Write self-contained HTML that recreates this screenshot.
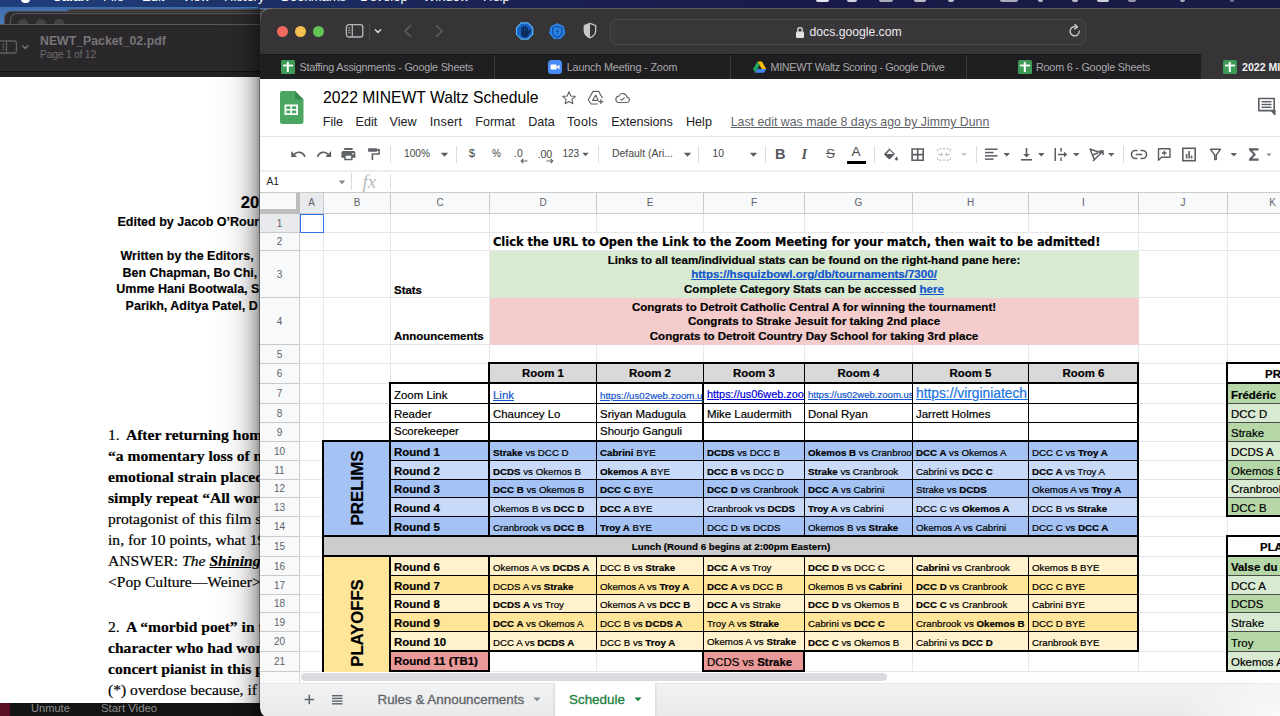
<!DOCTYPE html>
<html lang="en">
<head>
<meta charset="utf-8">
<title>2022 MINEWT Waltz Schedule - Google Sheets</title>
<style>
html,body{margin:0;padding:0;}
body{width:1280px;height:716px;overflow:hidden;position:relative;background:#2f5ea3;font-family:"Liberation Sans",Arial,sans-serif;}
div,span{box-sizing:content-box;}
#stage{position:absolute;left:0;top:0;width:1280px;height:716px;overflow:hidden;}
#stage div{position:absolute;}
.t{white-space:normal;line-height:1.15;-webkit-text-stroke:0.2px;}
.t>span{position:absolute;display:block;}
.t b{font-weight:bold;}
.ch{font-family:"Liberation Sans",sans-serif;}
.v{position:absolute;left:50%;white-space:nowrap;font-weight:bold;transform:translate(-50%,-50%) rotate(-90deg);line-height:1;}
.ab{position:absolute;}
svg{position:absolute;overflow:visible;}
.mi{position:absolute;top:115px;font-size:12.6px;color:#202124;white-space:nowrap;}
.tb{position:absolute;white-space:nowrap;color:#444746;}
.sep{position:absolute;top:146px;width:1px;height:17px;background:#dadce0;}
.tab{position:absolute;top:54.5px;height:25px;font-size:10.8px;color:#aaa8ab;line-height:25px;white-space:nowrap;}
.pdfb{-webkit-text-stroke:0.15px;position:absolute;font-family:"Liberation Sans",sans-serif;font-weight:bold;font-size:12.5px;color:#000;white-space:nowrap;}
.pdfs{-webkit-text-stroke:0.2px;position:absolute;font-family:"Liberation Serif",serif;font-size:15.6px;color:#000;white-space:nowrap;line-height:21px;}
</style>
</head>
<body>
<div id="stage">
<!-- desktop + menu bar -->
<div style="left:0;top:0;width:1280px;height:24px;background:linear-gradient(180deg,#3a68a8 0,#4a7dba 100%);"></div>
<div id="menubar" style="left:0;top:0;width:1280px;height:7px;background:linear-gradient(90deg,#1f3f7a 0,#1e3a74 10%,#1c3065 21%,#1b2052 40%,#1a1a48 65%,#1a1a46 100%);overflow:hidden;color:#fff;font-size:13px;white-space:nowrap;">
<span class="ab" style="left:21px;top:-8px;width:9px;height:10.5px;border-radius:4px;background:#fff;"></span><span class="ab" style="left:53px;top:-10.8px;font-weight:bold;">Safari</span>
<span class="ab" style="left:103px;top:-10.8px;">File</span>
<span class="ab" style="left:142px;top:-10.8px;">Edit</span>
<span class="ab" style="left:182px;top:-10.8px;">View</span>
<span class="ab" style="left:224px;top:-10.8px;">History</span>
<span class="ab" style="left:281px;top:-10.8px;">Bookmarks</span>
<span class="ab" style="left:360px;top:-10.8px;">Develop</span>
<span class="ab" style="left:423px;top:-10.8px;">Window</span>
<span class="ab" style="left:483px;top:-10.8px;">Help</span><span class="ab" style="left:816px;top:-3px;width:13px;height:5px;border-radius:2px;background:#e8e8ee;opacity:1;"></span><span class="ab" style="left:847px;top:-3px;width:10px;height:5px;border-radius:2px;background:#e8e8ee;opacity:0.9;"></span><span class="ab" style="left:879px;top:-3px;width:14px;height:5px;border-radius:2px;background:#e8e8ee;opacity:0.7;"></span><span class="ab" style="left:914px;top:-3px;width:12px;height:5px;border-radius:2px;background:#e8e8ee;opacity:0.8;"></span><span class="ab" style="left:948px;top:-3px;width:6px;height:5px;border-radius:2px;background:#e8e8ee;opacity:0.8;"></span><span class="ab" style="left:1000px;top:-3px;width:18px;height:5px;border-radius:2px;background:#e8e8ee;opacity:0.7;"></span><span class="ab" style="left:1038px;top:-3px;width:5px;height:5px;border-radius:2px;background:#e8e8ee;opacity:0.8;"></span><span class="ab" style="left:1072px;top:-3px;width:6px;height:5px;border-radius:2px;background:#e8e8ee;opacity:0.8;"></span><span class="ab" style="left:1097px;top:-3px;width:12px;height:5px;border-radius:2px;background:#e8e8ee;opacity:0.9;"></span><span class="ab" style="left:1128px;top:-3px;width:8px;height:5px;border-radius:2px;background:#e8e8ee;opacity:0.6;"></span><span class="ab" style="left:1180px;top:-3px;width:5px;height:5px;border-radius:2px;background:#e8e8ee;opacity:0.7;"></span><span class="ab" style="left:1230px;top:-3px;width:4px;height:5px;border-radius:2px;background:#e8e8ee;opacity:0.5;"></span>
</div>
<div style="left:258px;top:7px;width:1022px;height:1px;background:linear-gradient(90deg,#1c2f64 0,#1b2052 25%,#1a1a48 55%,#1a1a46 100%);"></div>
<!-- rear windows -->
<div style="left:65px;top:9px;width:600px;height:30px;background:#2b292c;border-top:1px solid #565457;border-radius:6px 0 0 0;"></div>
<div style="left:4px;top:11px;width:400px;height:30px;background:#2d2b2e;border-top:1px solid #4d4b4e;border-left:1px solid #4d4b4e;border-radius:7px 0 0 0;"></div>
<div style="left:10px;top:13px;width:400px;height:30px;background:#2c2a2d;border-top:1px solid #5a585b;border-left:1px solid #5a585b;border-radius:7px 0 0 0;"></div>
<div style="left:18px;top:19px;width:10px;height:10px;border-radius:5px;background:#454346;"></div>
<div style="left:36px;top:19px;width:10px;height:10px;border-radius:5px;background:#454346;"></div>
<div style="left:54px;top:19px;width:10px;height:10px;border-radius:5px;background:#454346;"></div>
<!-- zoom bar bottom-left -->
<div style="left:0;top:700px;width:300px;height:16px;background:#5a0f22;"></div>
<div style="left:10px;top:700px;width:300px;height:16px;background:#141414;border-radius:4px 0 0 0;"></div>
<div style="left:31px;top:702px;font-size:11.1px;color:#8e8e8e;white-space:nowrap;">Unmute</div>
<div style="left:101px;top:702px;font-size:11.4px;color:#8e8e8e;white-space:nowrap;">Start Video</div>
<!-- Preview window -->
<div id="preview" style="left:0;top:24px;width:300px;height:679px;background:#fff;overflow:hidden;">
 <div style="left:0;top:0;width:300px;height:47px;background:#2b282b;border-top:1px solid #5c5a5d;"></div>
 <div style="left:0;top:47px;width:300px;height:1px;background:#131113;"></div>
 <div style="left:0;top:48px;width:300px;height:5px;background:#242124;"></div>
 <svg style="left:1px;top:16px;" width="30" height="16" viewBox="0 0 30 16"><rect x="-3" y="1" width="18.5" height="12" rx="2.5" fill="none" stroke="#615e62" stroke-width="1.3"/><line x1="5.5" y1="1" x2="5.5" y2="13" stroke="#615e62" stroke-width="1.2"/><line x1="1" y1="4.5" x2="3.5" y2="4.5" stroke="#615e62" stroke-width="1"/><line x1="1" y1="7" x2="3.5" y2="7" stroke="#615e62" stroke-width="1"/><line x1="1" y1="9.5" x2="3.5" y2="9.5" stroke="#615e62" stroke-width="1"/><path d="M21.5 5.8 L24.2 8.5 L26.9 5.8" fill="none" stroke="#77747a" stroke-width="1.4" stroke-linecap="round" stroke-linejoin="round"/></svg>
 <div style="left:40px;top:10px;font-size:12.3px;font-weight:bold;color:#777478;white-space:nowrap;">NEWT_Packet_02.pdf</div>
 <div style="left:40px;top:25.2px;font-size:10.4px;letter-spacing:-0.25px;color:#6c696d;white-space:nowrap;">Page 1 of 12</div>
</div>
<!-- PDF page text (page coords) -->
<div class="pdfb" style="left:240.7px;top:192.5px;font-size:16.6px;">20</div>
<div class="pdfb" style="left:117.5px;top:215px;">Edited by Jacob O’Rour</div>
<div class="pdfb" style="left:120.5px;top:248.7px;">Written by the Editors,</div>
<div class="pdfb" style="left:122.5px;top:265.5px;">Ben Chapman, Bo Chi,</div>
<div class="pdfb" style="left:116.3px;top:281.5px;">Umme Hani Bootwala, S</div>
<div class="pdfb" style="left:125.6px;top:298.5px;">Parikh, Aditya Patel, D</div>
<div class="pdfs" style="left:108px;top:424px;">1.<span style="margin-left:6.2px"></span><b>After returning home, this</b><br><b>“a momentary loss of muscle</b><br><b>emotional strain placed on</b><br><b>simply repeat “All work and</b><br>protagonist of this film stays<br>in, for 10 points, what 1980<br>ANSWER: <i>The <b><u>Shining</u></b></i><br>&lt;Pop Culture—Weiner&gt;</div>
<div class="pdfs" style="left:108px;top:616px;">2.<span style="margin-left:6.2px"></span><b>A “morbid poet” in this</b><br><b>character who had wondered</b><br><b>concert pianist in this play</b><br>(*) overdose because, if the</div>
<!-- shadow of safari window over page -->
<div style="left:212px;top:8px;width:48px;height:708px;background:linear-gradient(90deg,rgba(0,0,0,0) 0,rgba(0,0,0,0.025) 37%,rgba(0,0,0,0.07) 58%,rgba(0,0,0,0.12) 69%,rgba(0,0,0,0.19) 79%,rgba(0,0,0,0.28) 90%,rgba(0,0,0,0.42) 100%);"></div>
<!-- Safari window -->
<div id="safari" style="left:260px;top:8px;width:1040px;height:709px;background:#fff;border-radius:10px 0 0 10px;overflow:hidden;">
 <div style="left:0;top:0;width:1040px;height:46px;background:#373438;border-top:1px solid #5e5c5f;"></div>
 <div style="left:0;top:46px;width:941px;height:25px;background:#1f1e21;"></div>
 <div style="left:941px;top:46px;width:100px;height:25px;background:#373438;"></div>
 <div style="left:0;top:46px;width:941px;height:1px;background:#161517;"></div>
 <div style="left:234px;top:47px;width:1px;height:24px;background:#3a383b;"></div>
 <div style="left:470px;top:47px;width:1px;height:24px;background:#3a383b;"></div>
 <div style="left:706px;top:47px;width:1px;height:24px;background:#3a383b;"></div>
</div>
<div style="left:260px;top:8px;width:12px;height:12px;border-top:1px solid #6e6c6f;border-left:1px solid #5a585b;border-radius:10px 0 0 0;"></div>
<!-- traffic lights -->
<div style="left:277.1px;top:25.8px;width:11px;height:11px;border-radius:6px;background:#ed6a5e;"></div>
<div style="left:294.9px;top:25.8px;width:11px;height:11px;border-radius:6px;background:#f5bf4f;"></div>
<div style="left:312.7px;top:25.8px;width:11px;height:11px;border-radius:6px;background:#61c454;"></div>
<!-- sidebar icon -->
<svg style="left:345px;top:23px;" width="40" height="17" viewBox="0 0 40 17"><rect x="1.4" y="1.6" width="16.4" height="12.4" rx="2.6" fill="none" stroke="#b9b7ba" stroke-width="1.3"/><line x1="7.3" y1="1.6" x2="7.3" y2="14" stroke="#b9b7ba" stroke-width="1.2"/><line x1="3.2" y1="5" x2="5.4" y2="5" stroke="#b9b7ba" stroke-width="0.9"/><line x1="3.2" y1="7.4" x2="5.4" y2="7.4" stroke="#b9b7ba" stroke-width="0.9"/><line x1="3.2" y1="9.8" x2="5.4" y2="9.8" stroke="#b9b7ba" stroke-width="0.9"/><line x1="24.5" y1="0" x2="24.5" y2="16" stroke="#4b494c" stroke-width="1"/><path d="M30.3 6.7 L33 9.4 L35.7 6.7" fill="none" stroke="#d6d4d7" stroke-width="1.5" stroke-linecap="round" stroke-linejoin="round"/></svg>
<svg style="left:400px;top:24px;" width="50" height="14" viewBox="0 0 50 14"><path d="M10.5 1.5 L5 7 L10.5 12.5" fill="none" stroke="#5f5d60" stroke-width="1.6" stroke-linecap="round" stroke-linejoin="round"/><path d="M36.5 1.5 L42 7 L36.5 12.5" fill="none" stroke="#5f5d60" stroke-width="1.6" stroke-linecap="round" stroke-linejoin="round"/></svg>
<!-- extension icons -->
<svg style="left:515px;top:22px;" width="90" height="18" viewBox="0 0 90 18"><polygon points="6.25,0.9 12.95,0.9 17.7,5.65 17.7,12.35 12.95,17.1 6.25,17.1 1.5,12.35 1.5,5.65" fill="#1764c6" stroke="#56b4f4" stroke-width="1.2" stroke-linejoin="round"/><g fill="#0d2b5c"><rect x="6.100" y="5" width="1.600" height="6" rx="0.800"/><rect x="8" y="3.700" width="1.600" height="7" rx="0.800"/><rect x="9.900" y="3.900" width="1.600" height="7" rx="0.800"/><rect x="11.800" y="5.200" width="1.600" height="6" rx="0.800"/><path d="M6.100 9.500 H13.400 L14.700 7.900 a0.900 0.900 0 0 1 1.400 1.100 L13.400 13.500 c-0.700 1.300 -1.800 2 -3.300 2 H9.600 c-2 0 -3.500 -1.500 -3.500 -3.500z"/></g><polygon points="42.3,1.6 48.5,4.6 50.0,11.3 45.7,16.6 38.9,16.6 34.6,11.3 36.1,4.6" fill="#2a82e6" stroke="#2a82e6" stroke-width="1" stroke-linejoin="round"/><path d="M42.300 4.300 L47 6 V9.600 c0 2.800 -2 4.800 -4.700 5.800 C39.600 14.400 37.600 12.400 37.600 9.600 V6z" fill="none" stroke="#134a9c" stroke-width="1.200" stroke-linejoin="round"/><path d="M43.200 6.300 L40.500 10 H42.200 L41.500 12.900 L44.300 9 H42.600z" fill="#134a9c"/><path d="M75 1.400 L80.700 3.500 V8.600 c0 3.500 -2.500 6.100 -5.700 7.200 C71.800 14.700 69.300 12.100 69.300 8.600 V3.500z" fill="#373438" stroke="#c9c7ca" stroke-width="1.300" stroke-linejoin="round"/><path d="M75 1.400 V15.800 C71.800 14.700 69.300 12.100 69.300 8.600 V3.500z" fill="#c9c7ca"/></svg>
<!-- URL bar -->
<div style="left:610px;top:19px;width:474px;height:24px;border-radius:7px;background:#3a373b;border:1px solid #4b484c;"></div>
<svg style="left:795px;top:25.5px;" width="10" height="13" viewBox="0 0 10 13"><rect x="1" y="5.500" width="8" height="6.500" rx="1.200" fill="#e4e2e5"/><path d="M2.800 6 V3.800 a2.200 2.200 0 0 1 4.400 0 V6" fill="none" stroke="#e4e2e5" stroke-width="1.300"/></svg>
<div style="left:809.5px;top:25px;font-size:12.2px;color:#eceaed;white-space:nowrap;">docs.google.com</div>
<svg style="left:1068px;top:24px;" width="14" height="14" viewBox="0 0 14 14"><path d="M11.300 7.200 a4.600 4.600 0 1 1 -2.500 -4.100" fill="none" stroke="#d2d0d3" stroke-width="1.300" stroke-linecap="round"/><path d="M6.800 0.600 L9.500 3 L6.600 4.900" fill="none" stroke="#d2d0d3" stroke-width="1.300" stroke-linecap="round" stroke-linejoin="round"/></svg>
<!-- tabs -->
<svg style="left:281px;top:60px;" width="14" height="14" viewBox="0 0 14 14"><rect width="14" height="14" rx="1.500" fill="#3d9b57"/><rect x="5.800" y="2" width="2" height="10" fill="#fff"/><rect x="2" y="4.600" width="10" height="1.800" fill="#fff"/></svg>
<div class="tab" style="left:299.5px;letter-spacing:-0.23px;">Staffing Assignments - Google Sheets</div>
<svg style="left:548px;top:60px;" width="14" height="14" viewBox="0 0 14 14"><rect width="14" height="14" rx="3.500" fill="#4b8df8"/><rect x="2.600" y="4.400" width="6" height="5.200" rx="1.200" fill="#fff"/><path d="M9 6.400 L11.500 4.800 V9.200 L9 7.600z" fill="#fff"/></svg>
<div class="tab" style="left:566.7px;letter-spacing:-0.16px;">Launch Meeting - Zoom</div>
<svg style="left:752.7px;top:61px;" width="13.3" height="12.4" viewBox="0 0 15 14"><polygon points="5,0.500 10,0.500 15,9 10,9" fill="#fbbc04"/><polygon points="5,0.500 0,9 2.500,13.300 7.500,4.800" fill="#1ea362"/><polygon points="2.500,13.300 12.500,13.300 15,9 5,9" fill="#4285f4"/><polygon points="5,0.500 7.500,4.800 10,9 10,9 5,0.500" fill="#ea4335"/></svg>
<div class="tab" style="left:770.5px;letter-spacing:-0.33px;">MINEWT Waltz Scoring - Google Drive</div>
<svg style="left:1017.500px;top:60px;" width="14" height="14" viewBox="0 0 14 14"><rect width="14" height="14" rx="1.500" fill="#3d9b57"/><rect x="5.800" y="2" width="2" height="10" fill="#fff"/><rect x="2" y="4.600" width="10" height="1.800" fill="#fff"/></svg>
<div class="tab" style="left:1036px;letter-spacing:-0.22px;">Room 6 - Google Sheets</div>
<svg style="left:1223px;top:60px;" width="14" height="14" viewBox="0 0 14 14"><rect width="14" height="14" rx="1.500" fill="#3d9b57"/><rect x="5.800" y="2" width="2" height="10" fill="#fff"/><rect x="2" y="4.600" width="10" height="1.800" fill="#fff"/></svg>
<div class="tab" style="left:1242px;color:#f0eef1;font-weight:bold;font-size:10.6px;">2022 MINEWT Waltz Schedule</div>
<div style="left:260px;top:192px;width:1020px;height:480px;background:#fff;"></div>
<div style="left:323px;top:214px;width:1px;height:458px;background:#e7e7e7;"></div>
<div style="left:390px;top:214px;width:1px;height:458px;background:#e7e7e7;"></div>
<div style="left:489px;top:214px;width:1px;height:458px;background:#e7e7e7;"></div>
<div style="left:596px;top:214px;width:1px;height:458px;background:#e7e7e7;"></div>
<div style="left:703px;top:214px;width:1px;height:458px;background:#e7e7e7;"></div>
<div style="left:804px;top:214px;width:1px;height:458px;background:#e7e7e7;"></div>
<div style="left:912px;top:214px;width:1px;height:458px;background:#e7e7e7;"></div>
<div style="left:1028px;top:214px;width:1px;height:458px;background:#e7e7e7;"></div>
<div style="left:1138px;top:214px;width:1px;height:458px;background:#e7e7e7;"></div>
<div style="left:1227px;top:214px;width:1px;height:458px;background:#e7e7e7;"></div>
<div style="left:1317px;top:214px;width:1px;height:458px;background:#e7e7e7;"></div>
<div style="left:300px;top:232px;width:980px;height:1px;background:#e7e7e7;"></div>
<div style="left:300px;top:250px;width:980px;height:1px;background:#e7e7e7;"></div>
<div style="left:300px;top:297px;width:980px;height:1px;background:#e7e7e7;"></div>
<div style="left:300px;top:344px;width:980px;height:1px;background:#e7e7e7;"></div>
<div style="left:300px;top:363px;width:980px;height:1px;background:#e7e7e7;"></div>
<div style="left:300px;top:383px;width:980px;height:1px;background:#e7e7e7;"></div>
<div style="left:300px;top:403px;width:980px;height:1px;background:#e7e7e7;"></div>
<div style="left:300px;top:422px;width:980px;height:1px;background:#e7e7e7;"></div>
<div style="left:300px;top:441px;width:980px;height:1px;background:#e7e7e7;"></div>
<div style="left:300px;top:460px;width:980px;height:1px;background:#e7e7e7;"></div>
<div style="left:300px;top:479px;width:980px;height:1px;background:#e7e7e7;"></div>
<div style="left:300px;top:497px;width:980px;height:1px;background:#e7e7e7;"></div>
<div style="left:300px;top:516px;width:980px;height:1px;background:#e7e7e7;"></div>
<div style="left:300px;top:536px;width:980px;height:1px;background:#e7e7e7;"></div>
<div style="left:300px;top:556px;width:980px;height:1px;background:#e7e7e7;"></div>
<div style="left:300px;top:575px;width:980px;height:1px;background:#e7e7e7;"></div>
<div style="left:300px;top:594px;width:980px;height:1px;background:#e7e7e7;"></div>
<div style="left:300px;top:612px;width:980px;height:1px;background:#e7e7e7;"></div>
<div style="left:300px;top:631px;width:980px;height:1px;background:#e7e7e7;"></div>
<div style="left:300px;top:651px;width:980px;height:1px;background:#e7e7e7;"></div>
<div style="left:300px;top:671px;width:980px;height:1px;background:#e7e7e7;"></div>
<div style="left:490px;top:233px;width:648px;height:17px;background:#fff;"></div>
<div style="left:490px;top:251px;width:649px;height:47px;background:#d9ead3;"></div>
<div style="left:490px;top:298px;width:649px;height:47px;background:#f4cccc;"></div>
<div style="left:490px;top:364px;width:649px;height:20px;background:#d9d9d9;"></div>
<div style="left:391px;top:384px;width:748px;height:58px;background:#ffffff;"></div>
<div style="left:391px;top:442px;width:748px;height:19px;background:#a4c2f4;"></div>
<div style="left:391px;top:461px;width:748px;height:19px;background:#c9daf8;"></div>
<div style="left:391px;top:480px;width:748px;height:18px;background:#a4c2f4;"></div>
<div style="left:391px;top:498px;width:748px;height:19px;background:#c9daf8;"></div>
<div style="left:391px;top:517px;width:748px;height:20px;background:#a4c2f4;"></div>
<div style="left:324px;top:442px;width:67px;height:95px;background:#a4c2f4;"></div>
<div style="left:324px;top:537px;width:815px;height:20px;background:#cccccc;"></div>
<div style="left:391px;top:557px;width:748px;height:19px;background:#fff2cc;"></div>
<div style="left:391px;top:576px;width:748px;height:19px;background:#ffe599;"></div>
<div style="left:391px;top:595px;width:748px;height:18px;background:#fff2cc;"></div>
<div style="left:391px;top:613px;width:748px;height:19px;background:#ffe599;"></div>
<div style="left:391px;top:632px;width:748px;height:20px;background:#fff2cc;"></div>
<div style="left:324px;top:557px;width:67px;height:115px;background:#ffe599;"></div>
<div style="left:391px;top:652px;width:99px;height:20px;background:#ea9999;"></div>
<div style="left:704px;top:652px;width:101px;height:20px;background:#ea9999;"></div>
<div style="left:1228px;top:364px;width:90px;height:20px;background:#ffffff;"></div>
<div style="left:1228px;top:384px;width:90px;height:20px;background:#b6d7a8;"></div>
<div style="left:1228px;top:404px;width:90px;height:19px;background:#d9ead3;"></div>
<div style="left:1228px;top:423px;width:90px;height:19px;background:#b6d7a8;"></div>
<div style="left:1228px;top:442px;width:90px;height:19px;background:#d9ead3;"></div>
<div style="left:1228px;top:461px;width:90px;height:19px;background:#b6d7a8;"></div>
<div style="left:1228px;top:480px;width:90px;height:18px;background:#d9ead3;"></div>
<div style="left:1228px;top:498px;width:90px;height:19px;background:#b6d7a8;"></div>
<div style="left:1228px;top:537px;width:90px;height:20px;background:#ffffff;"></div>
<div style="left:1228px;top:557px;width:90px;height:19px;background:#b6d7a8;"></div>
<div style="left:1228px;top:576px;width:90px;height:19px;background:#d9ead3;"></div>
<div style="left:1228px;top:595px;width:90px;height:18px;background:#b6d7a8;"></div>
<div style="left:1228px;top:613px;width:90px;height:19px;background:#d9ead3;"></div>
<div style="left:1228px;top:632px;width:90px;height:20px;background:#b6d7a8;"></div>
<div style="left:1228px;top:652px;width:90px;height:20px;background:#d9ead3;"></div>
<div style="left:488px;top:362px;width:651px;height:2px;background:#000;"></div>
<div style="left:389px;top:382px;width:750px;height:2px;background:#000;"></div>
<div style="left:488px;top:362px;width:2px;height:175px;background:#000;"></div>
<div style="left:1137px;top:362px;width:2px;height:290px;background:#000;"></div>
<div style="left:596px;top:364px;width:1px;height:20px;background:#000;"></div>
<div style="left:703px;top:364px;width:1px;height:20px;background:#000;"></div>
<div style="left:804px;top:364px;width:1px;height:20px;background:#000;"></div>
<div style="left:912px;top:364px;width:1px;height:20px;background:#000;"></div>
<div style="left:1028px;top:364px;width:1px;height:20px;background:#000;"></div>
<div style="left:389px;top:382px;width:2px;height:155px;background:#000;"></div>
<div style="left:389px;top:557px;width:2px;height:115px;background:#000;"></div>
<div style="left:391px;top:670px;width:99px;height:2px;background:#000;"></div>
<div style="left:704px;top:670px;width:101px;height:2px;background:#000;"></div>
<div style="left:391px;top:403px;width:748px;height:1px;background:#000;"></div>
<div style="left:391px;top:422px;width:748px;height:1px;background:#000;"></div>
<div style="left:596px;top:384px;width:1px;height:58px;background:#000;"></div>
<div style="left:804px;top:384px;width:1px;height:58px;background:#000;"></div>
<div style="left:912px;top:384px;width:1px;height:58px;background:#000;"></div>
<div style="left:1028px;top:384px;width:1px;height:58px;background:#000;"></div>
<div style="left:702px;top:384px;width:2px;height:58px;background:#000;"></div>
<div style="left:322px;top:440px;width:817px;height:2px;background:#000;"></div>
<div style="left:322px;top:440px;width:2px;height:232px;background:#000;"></div>
<div style="left:391px;top:460px;width:748px;height:1px;background:#000;"></div>
<div style="left:391px;top:479px;width:748px;height:1px;background:#000;"></div>
<div style="left:391px;top:497px;width:748px;height:1px;background:#000;"></div>
<div style="left:391px;top:516px;width:748px;height:1px;background:#000;"></div>
<div style="left:596px;top:442px;width:1px;height:95px;background:#000;"></div>
<div style="left:703px;top:442px;width:1px;height:95px;background:#000;"></div>
<div style="left:804px;top:442px;width:1px;height:95px;background:#000;"></div>
<div style="left:912px;top:442px;width:1px;height:95px;background:#000;"></div>
<div style="left:1028px;top:442px;width:1px;height:95px;background:#000;"></div>
<div style="left:322px;top:535px;width:817px;height:2px;background:#000;"></div>
<div style="left:322px;top:555px;width:817px;height:2px;background:#000;"></div>
<div style="left:391px;top:575px;width:748px;height:1px;background:#000;"></div>
<div style="left:391px;top:594px;width:748px;height:1px;background:#000;"></div>
<div style="left:391px;top:612px;width:748px;height:1px;background:#000;"></div>
<div style="left:391px;top:631px;width:748px;height:1px;background:#000;"></div>
<div style="left:391px;top:650px;width:748px;height:2px;background:#000;"></div>
<div style="left:488px;top:557px;width:2px;height:115px;background:#000;"></div>
<div style="left:596px;top:557px;width:1px;height:95px;background:#000;"></div>
<div style="left:703px;top:557px;width:1px;height:95px;background:#000;"></div>
<div style="left:804px;top:557px;width:1px;height:95px;background:#000;"></div>
<div style="left:912px;top:557px;width:1px;height:95px;background:#000;"></div>
<div style="left:1028px;top:557px;width:1px;height:95px;background:#000;"></div>
<div style="left:702px;top:652px;width:2px;height:20px;background:#000;"></div>
<div style="left:803px;top:652px;width:2px;height:20px;background:#000;"></div>
<div style="left:1226px;top:362px;width:2px;height:155px;background:#000;"></div>
<div style="left:1226px;top:362px;width:54px;height:2px;background:#000;"></div>
<div style="left:1226px;top:382px;width:54px;height:2px;background:#000;"></div>
<div style="left:1228px;top:403px;width:52px;height:1px;background:#4a4a4a;"></div>
<div style="left:1228px;top:422px;width:52px;height:1px;background:#4a4a4a;"></div>
<div style="left:1228px;top:441px;width:52px;height:1px;background:#4a4a4a;"></div>
<div style="left:1228px;top:460px;width:52px;height:1px;background:#4a4a4a;"></div>
<div style="left:1228px;top:479px;width:52px;height:1px;background:#4a4a4a;"></div>
<div style="left:1228px;top:497px;width:52px;height:1px;background:#4a4a4a;"></div>
<div style="left:1226px;top:515px;width:54px;height:2px;background:#000;"></div>
<div style="left:1226px;top:535px;width:2px;height:137px;background:#000;"></div>
<div style="left:1226px;top:535px;width:54px;height:2px;background:#000;"></div>
<div style="left:1226px;top:555px;width:54px;height:2px;background:#000;"></div>
<div style="left:1228px;top:575px;width:52px;height:1px;background:#4a4a4a;"></div>
<div style="left:1228px;top:594px;width:52px;height:1px;background:#4a4a4a;"></div>
<div style="left:1228px;top:612px;width:52px;height:1px;background:#4a4a4a;"></div>
<div style="left:1228px;top:631px;width:52px;height:1px;background:#4a4a4a;"></div>
<div style="left:1228px;top:651px;width:52px;height:1px;background:#4a4a4a;"></div>
<div style="left:1226px;top:670px;width:54px;height:2px;background:#000;"></div>
<div class="t" style="left:490px;top:233px;width:648px;height:17px;font-size:11.4px;text-align:left;color:#000;font-weight:bold;font-family:'DejaVu Sans',sans-serif;white-space:nowrap;"><span style="left:3px;right:3px;bottom:0.7px;">Click the URL to Open the Link to the Zoom Meeting for your match, then wait to be admitted!</span></div>
<div class="t" style="left:391px;top:251px;width:98px;height:46px;font-size:11.45px;text-align:left;color:#000;font-weight:bold;overflow:hidden;"><span style="left:3px;right:3px;bottom:0.2px;">Stats</span></div>
<div class="t" style="left:391px;top:298px;width:98px;height:46px;font-size:11.45px;text-align:left;color:#000;font-weight:bold;overflow:hidden;"><span style="left:3px;right:3px;bottom:0.5px;">Announcements</span></div>
<div class="t" style="left:490px;top:251px;width:648px;height:46px;font-size:11.55px;text-align:center;color:#000;font-weight:bold;overflow:hidden;line-height:14.2px;"><span style="left:3px;right:3px;bottom:1.2px;">Links to all team/individual stats can be found on the right-hand pane here:<br><u style="color:#1155cc">https://hsquizbowl.org/db/tournaments/7300/</u><br>Complete Category Stats can be accessed <u style="color:#1155cc">here</u></span></div>
<div class="t" style="left:490px;top:298px;width:648px;height:46px;font-size:11.55px;text-align:center;color:#000;font-weight:bold;overflow:hidden;line-height:14.2px;"><span style="left:3px;right:3px;bottom:1.2px;">Congrats to Detroit Catholic Central A for winning the tournament!<br>Congrats to Strake Jesuit for taking 2nd place<br>Congrats to Detroit Country Day School for taking 3rd place</span></div>
<div class="t" style="left:490px;top:364px;width:106px;height:19px;font-size:11.45px;text-align:center;color:#000;font-weight:bold;overflow:hidden;"><span style="left:3px;right:3px;bottom:3.1px;">Room 1</span></div>
<div class="t" style="left:597px;top:364px;width:106px;height:19px;font-size:11.45px;text-align:center;color:#000;font-weight:bold;overflow:hidden;"><span style="left:3px;right:3px;bottom:3.1px;">Room 2</span></div>
<div class="t" style="left:704px;top:364px;width:100px;height:19px;font-size:11.45px;text-align:center;color:#000;font-weight:bold;overflow:hidden;"><span style="left:3px;right:3px;bottom:3.1px;">Room 3</span></div>
<div class="t" style="left:805px;top:364px;width:107px;height:19px;font-size:11.45px;text-align:center;color:#000;font-weight:bold;overflow:hidden;"><span style="left:3px;right:3px;bottom:3.1px;">Room 4</span></div>
<div class="t" style="left:913px;top:364px;width:115px;height:19px;font-size:11.45px;text-align:center;color:#000;font-weight:bold;overflow:hidden;"><span style="left:3px;right:3px;bottom:3.1px;">Room 5</span></div>
<div class="t" style="left:1029px;top:364px;width:109px;height:19px;font-size:11.45px;text-align:center;color:#000;font-weight:bold;overflow:hidden;"><span style="left:3px;right:3px;bottom:3.1px;">Room 6</span></div>
<div class="t" style="left:391px;top:384px;width:98px;height:19px;font-size:11.45px;text-align:left;color:#000;overflow:hidden;"><span style="left:3px;right:3px;bottom:0.8px;">Zoom Link</span></div>
<div class="t" style="left:391px;top:404px;width:98px;height:18px;font-size:11.45px;text-align:left;color:#000;overflow:hidden;"><span style="left:3px;right:3px;bottom:0.8px;">Reader</span></div>
<div class="t" style="left:391px;top:423px;width:98px;height:18px;font-size:11.45px;text-align:left;color:#000;overflow:hidden;"><span style="left:3px;right:3px;bottom:2.7px;">Scorekeeper</span></div>
<div class="t" style="left:490px;top:384px;width:106px;height:19px;font-size:11.45px;text-align:left;color:#1155cc;overflow:hidden;"><span style="left:3px;right:3px;bottom:0.8px;"><u>Link</u></span></div>
<div class="t" style="left:597px;top:384px;width:106px;height:19px;font-size:9.71px;text-align:left;color:#1155cc;overflow:hidden;white-space:nowrap;"><span style="left:3px;right:3px;bottom:1.9px;"><u>https://us02web.zoom.us/j/8</u></span></div>
<div class="t" style="left:704px;top:384px;width:100px;height:19px;font-size:10.9px;text-align:left;color:#0000e0;overflow:hidden;white-space:nowrap;"><span style="left:3px;right:3px;bottom:2px;"><u>https://us06web.zoom.us/j/8</u></span></div>
<div class="t" style="left:805px;top:384px;width:107px;height:19px;font-size:9.55px;text-align:left;color:#1155cc;overflow:hidden;white-space:nowrap;"><span style="left:3px;right:3px;bottom:1.9px;"><u>https://us02web.zoom.us/j/8</u></span></div>
<div class="t" style="left:913px;top:384px;width:115px;height:19px;font-size:13.77px;text-align:left;color:#1a73e8;overflow:hidden;white-space:nowrap;"><span style="left:3px;right:3px;bottom:1px;"><u>https://virginiatech.zoom.us</u></span></div>
<div class="t" style="left:490px;top:404px;width:106px;height:18px;font-size:11.45px;text-align:left;color:#000;overflow:hidden;"><span style="left:3px;right:3px;bottom:0.8px;">Chauncey Lo</span></div>
<div class="t" style="left:597px;top:404px;width:106px;height:18px;font-size:11.45px;text-align:left;color:#000;overflow:hidden;"><span style="left:3px;right:3px;bottom:0.8px;">Sriyan Madugula</span></div>
<div class="t" style="left:704px;top:404px;width:100px;height:18px;font-size:11.45px;text-align:left;color:#000;overflow:hidden;"><span style="left:3px;right:3px;bottom:0.8px;">Mike Laudermith</span></div>
<div class="t" style="left:805px;top:404px;width:107px;height:18px;font-size:11.45px;text-align:left;color:#000;overflow:hidden;"><span style="left:3px;right:3px;bottom:0.8px;">Donal Ryan</span></div>
<div class="t" style="left:913px;top:404px;width:115px;height:18px;font-size:11.45px;text-align:left;color:#000;overflow:hidden;"><span style="left:3px;right:3px;bottom:0.8px;">Jarrett Holmes</span></div>
<div class="t" style="left:597px;top:423px;width:106px;height:18px;font-size:11.45px;text-align:left;color:#000;overflow:hidden;"><span style="left:3px;right:3px;bottom:2.7px;">Shourjo Ganguli</span></div>
<div class="t" style="left:391px;top:442px;width:98px;height:18px;font-size:11.45px;text-align:left;color:#000;font-weight:bold;overflow:hidden;white-space:nowrap;"><span style="left:3px;right:3px;bottom:0.8px;">Round 1</span></div>
<div class="t" style="left:391px;top:461px;width:98px;height:18px;font-size:11.45px;text-align:left;color:#000;font-weight:bold;overflow:hidden;white-space:nowrap;"><span style="left:3px;right:3px;bottom:0.8px;">Round 2</span></div>
<div class="t" style="left:391px;top:480px;width:98px;height:17px;font-size:11.45px;text-align:left;color:#000;font-weight:bold;overflow:hidden;white-space:nowrap;"><span style="left:3px;right:3px;bottom:0.8px;">Round 3</span></div>
<div class="t" style="left:391px;top:498px;width:98px;height:18px;font-size:11.45px;text-align:left;color:#000;font-weight:bold;overflow:hidden;white-space:nowrap;"><span style="left:3px;right:3px;bottom:0.8px;">Round 4</span></div>
<div class="t" style="left:391px;top:517px;width:98px;height:19px;font-size:11.45px;text-align:left;color:#000;font-weight:bold;overflow:hidden;white-space:nowrap;"><span style="left:3px;right:3px;bottom:1.8px;">Round 5</span></div>
<div class="t" style="left:391px;top:557px;width:98px;height:18px;font-size:11.45px;text-align:left;color:#000;font-weight:bold;overflow:hidden;white-space:nowrap;"><span style="left:3px;right:3px;bottom:0.8px;">Round 6</span></div>
<div class="t" style="left:391px;top:576px;width:98px;height:18px;font-size:11.45px;text-align:left;color:#000;font-weight:bold;overflow:hidden;white-space:nowrap;"><span style="left:3px;right:3px;bottom:0.8px;">Round 7</span></div>
<div class="t" style="left:391px;top:595px;width:98px;height:17px;font-size:11.45px;text-align:left;color:#000;font-weight:bold;overflow:hidden;white-space:nowrap;"><span style="left:3px;right:3px;bottom:0.8px;">Round 8</span></div>
<div class="t" style="left:391px;top:613px;width:98px;height:18px;font-size:11.45px;text-align:left;color:#000;font-weight:bold;overflow:hidden;white-space:nowrap;"><span style="left:3px;right:3px;bottom:0.8px;">Round 9</span></div>
<div class="t" style="left:391px;top:632px;width:98px;height:19px;font-size:11.45px;text-align:left;color:#000;font-weight:bold;overflow:hidden;white-space:nowrap;"><span style="left:3px;right:3px;bottom:2.3px;">Round 10</span></div>
<div class="t" style="left:391px;top:652px;width:98px;height:19px;font-size:11.45px;text-align:left;color:#000;font-weight:bold;overflow:hidden;white-space:nowrap;"><span style="left:3px;right:3px;bottom:3.3px;">Round 11 (TB1)</span></div>
<div class="t" style="left:490px;top:442px;width:106px;height:18px;font-size:9.72px;text-align:left;color:#000;overflow:hidden;white-space:nowrap;"><span style="left:3px;right:3px;bottom:1.5px;"><b>Strake</b> vs DCC D</span></div>
<div class="t" style="left:597px;top:442px;width:106px;height:18px;font-size:9.72px;text-align:left;color:#000;overflow:hidden;white-space:nowrap;"><span style="left:3px;right:3px;bottom:1.5px;"><b>Cabrini</b> BYE</span></div>
<div class="t" style="left:704px;top:442px;width:100px;height:18px;font-size:9.72px;text-align:left;color:#000;overflow:hidden;white-space:nowrap;"><span style="left:3px;right:3px;bottom:1.5px;"><b>DCDS</b> vs DCC B</span></div>
<div class="t" style="left:805px;top:442px;width:107px;height:18px;font-size:9.72px;text-align:left;color:#000;overflow:hidden;white-space:nowrap;"><span style="left:3px;right:3px;bottom:1.5px;"><b>Okemos B</b> vs Cranbrook</span></div>
<div class="t" style="left:913px;top:442px;width:115px;height:18px;font-size:9.72px;text-align:left;color:#000;overflow:hidden;white-space:nowrap;"><span style="left:3px;right:3px;bottom:1.5px;"><b>DCC A</b> vs Okemos A</span></div>
<div class="t" style="left:1029px;top:442px;width:109px;height:18px;font-size:9.72px;text-align:left;color:#000;overflow:hidden;white-space:nowrap;"><span style="left:3px;right:3px;bottom:1.5px;">DCC C vs <b>Troy A</b></span></div>
<div class="t" style="left:490px;top:461px;width:106px;height:18px;font-size:9.72px;text-align:left;color:#000;overflow:hidden;white-space:nowrap;"><span style="left:3px;right:3px;bottom:1.5px;"><b>DCDS</b> vs Okemos B</span></div>
<div class="t" style="left:597px;top:461px;width:106px;height:18px;font-size:9.72px;text-align:left;color:#000;overflow:hidden;white-space:nowrap;"><span style="left:3px;right:3px;bottom:1.5px;"><b>Okemos A</b> BYE</span></div>
<div class="t" style="left:704px;top:461px;width:100px;height:18px;font-size:9.72px;text-align:left;color:#000;overflow:hidden;white-space:nowrap;"><span style="left:3px;right:3px;bottom:1.5px;"><b>DCC B</b> vs DCC D</span></div>
<div class="t" style="left:805px;top:461px;width:107px;height:18px;font-size:9.72px;text-align:left;color:#000;overflow:hidden;white-space:nowrap;"><span style="left:3px;right:3px;bottom:1.5px;"><b>Strake</b> vs Cranbrook</span></div>
<div class="t" style="left:913px;top:461px;width:115px;height:18px;font-size:9.72px;text-align:left;color:#000;overflow:hidden;white-space:nowrap;"><span style="left:3px;right:3px;bottom:1.5px;">Cabrini vs <b>DCC C</b></span></div>
<div class="t" style="left:1029px;top:461px;width:109px;height:18px;font-size:9.72px;text-align:left;color:#000;overflow:hidden;white-space:nowrap;"><span style="left:3px;right:3px;bottom:1.5px;"><b>DCC A</b> vs Troy A</span></div>
<div class="t" style="left:490px;top:480px;width:106px;height:17px;font-size:9.72px;text-align:left;color:#000;overflow:hidden;white-space:nowrap;"><span style="left:3px;right:3px;bottom:1.5px;"><b>DCC B</b> vs Okemos B</span></div>
<div class="t" style="left:597px;top:480px;width:106px;height:17px;font-size:9.72px;text-align:left;color:#000;overflow:hidden;white-space:nowrap;"><span style="left:3px;right:3px;bottom:1.5px;"><b>DCC C</b> BYE</span></div>
<div class="t" style="left:704px;top:480px;width:100px;height:17px;font-size:9.72px;text-align:left;color:#000;overflow:hidden;white-space:nowrap;"><span style="left:3px;right:3px;bottom:1.5px;"><b>DCC D</b> vs Cranbrook</span></div>
<div class="t" style="left:805px;top:480px;width:107px;height:17px;font-size:9.72px;text-align:left;color:#000;overflow:hidden;white-space:nowrap;"><span style="left:3px;right:3px;bottom:1.5px;"><b>DCC A</b> vs Cabrini</span></div>
<div class="t" style="left:913px;top:480px;width:115px;height:17px;font-size:9.72px;text-align:left;color:#000;overflow:hidden;white-space:nowrap;"><span style="left:3px;right:3px;bottom:1.5px;">Strake vs <b>DCDS</b></span></div>
<div class="t" style="left:1029px;top:480px;width:109px;height:17px;font-size:9.72px;text-align:left;color:#000;overflow:hidden;white-space:nowrap;"><span style="left:3px;right:3px;bottom:1.5px;">Okemos A vs <b>Troy A</b></span></div>
<div class="t" style="left:490px;top:498px;width:106px;height:18px;font-size:9.72px;text-align:left;color:#000;overflow:hidden;white-space:nowrap;"><span style="left:3px;right:3px;bottom:1.5px;">Okemos B vs <b>DCC D</b></span></div>
<div class="t" style="left:597px;top:498px;width:106px;height:18px;font-size:9.72px;text-align:left;color:#000;overflow:hidden;white-space:nowrap;"><span style="left:3px;right:3px;bottom:1.5px;"><b>DCC A</b> BYE</span></div>
<div class="t" style="left:704px;top:498px;width:100px;height:18px;font-size:9.72px;text-align:left;color:#000;overflow:hidden;white-space:nowrap;"><span style="left:3px;right:3px;bottom:1.5px;">Cranbrook vs <b>DCDS</b></span></div>
<div class="t" style="left:805px;top:498px;width:107px;height:18px;font-size:9.72px;text-align:left;color:#000;overflow:hidden;white-space:nowrap;"><span style="left:3px;right:3px;bottom:1.5px;"><b>Troy A</b> vs Cabrini</span></div>
<div class="t" style="left:913px;top:498px;width:115px;height:18px;font-size:9.72px;text-align:left;color:#000;overflow:hidden;white-space:nowrap;"><span style="left:3px;right:3px;bottom:1.5px;">DCC C vs <b>Okemos A</b></span></div>
<div class="t" style="left:1029px;top:498px;width:109px;height:18px;font-size:9.72px;text-align:left;color:#000;overflow:hidden;white-space:nowrap;"><span style="left:3px;right:3px;bottom:1.5px;">DCC B vs <b>Strake</b></span></div>
<div class="t" style="left:490px;top:517px;width:106px;height:19px;font-size:9.72px;text-align:left;color:#000;overflow:hidden;white-space:nowrap;"><span style="left:3px;right:3px;bottom:2.5px;">Cranbrook vs <b>DCC B</b></span></div>
<div class="t" style="left:597px;top:517px;width:106px;height:19px;font-size:9.72px;text-align:left;color:#000;overflow:hidden;white-space:nowrap;"><span style="left:3px;right:3px;bottom:2.5px;"><b>Troy A</b> BYE</span></div>
<div class="t" style="left:704px;top:517px;width:100px;height:19px;font-size:9.72px;text-align:left;color:#000;overflow:hidden;white-space:nowrap;"><span style="left:3px;right:3px;bottom:2.5px;">DCC D vs DCDS</span></div>
<div class="t" style="left:805px;top:517px;width:107px;height:19px;font-size:9.72px;text-align:left;color:#000;overflow:hidden;white-space:nowrap;"><span style="left:3px;right:3px;bottom:2.5px;">Okemos B vs <b>Strake</b></span></div>
<div class="t" style="left:913px;top:517px;width:115px;height:19px;font-size:9.72px;text-align:left;color:#000;overflow:hidden;white-space:nowrap;"><span style="left:3px;right:3px;bottom:2.5px;">Okemos A vs Cabrini</span></div>
<div class="t" style="left:1029px;top:517px;width:109px;height:19px;font-size:9.72px;text-align:left;color:#000;overflow:hidden;white-space:nowrap;"><span style="left:3px;right:3px;bottom:2.5px;">DCC C vs <b>DCC A</b></span></div>
<div class="t" style="left:490px;top:557px;width:106px;height:18px;font-size:9.72px;text-align:left;color:#000;overflow:hidden;white-space:nowrap;"><span style="left:3px;right:3px;bottom:1.5px;">Okemos A vs <b>DCDS A</b></span></div>
<div class="t" style="left:597px;top:557px;width:106px;height:18px;font-size:9.72px;text-align:left;color:#000;overflow:hidden;white-space:nowrap;"><span style="left:3px;right:3px;bottom:1.5px;">DCC B vs <b>Strake</b></span></div>
<div class="t" style="left:704px;top:557px;width:100px;height:18px;font-size:9.72px;text-align:left;color:#000;overflow:hidden;white-space:nowrap;"><span style="left:3px;right:3px;bottom:1.5px;"><b>DCC A</b> vs Troy</span></div>
<div class="t" style="left:805px;top:557px;width:107px;height:18px;font-size:9.72px;text-align:left;color:#000;overflow:hidden;white-space:nowrap;"><span style="left:3px;right:3px;bottom:1.5px;"><b>DCC D</b> vs DCC C</span></div>
<div class="t" style="left:913px;top:557px;width:115px;height:18px;font-size:9.72px;text-align:left;color:#000;overflow:hidden;white-space:nowrap;"><span style="left:3px;right:3px;bottom:1.5px;"><b>Cabrini</b> vs Cranbrook</span></div>
<div class="t" style="left:1029px;top:557px;width:109px;height:18px;font-size:9.72px;text-align:left;color:#000;overflow:hidden;white-space:nowrap;"><span style="left:3px;right:3px;bottom:1.5px;">Okemos B BYE</span></div>
<div class="t" style="left:490px;top:576px;width:106px;height:18px;font-size:9.72px;text-align:left;color:#000;overflow:hidden;white-space:nowrap;"><span style="left:3px;right:3px;bottom:1.5px;">DCDS A vs <b>Strake</b></span></div>
<div class="t" style="left:597px;top:576px;width:106px;height:18px;font-size:9.72px;text-align:left;color:#000;overflow:hidden;white-space:nowrap;"><span style="left:3px;right:3px;bottom:1.5px;">Okemos A vs <b>Troy A</b></span></div>
<div class="t" style="left:704px;top:576px;width:100px;height:18px;font-size:9.72px;text-align:left;color:#000;overflow:hidden;white-space:nowrap;"><span style="left:3px;right:3px;bottom:1.5px;"><b>DCC A</b> vs DCC B</span></div>
<div class="t" style="left:805px;top:576px;width:107px;height:18px;font-size:9.72px;text-align:left;color:#000;overflow:hidden;white-space:nowrap;"><span style="left:3px;right:3px;bottom:1.5px;">Okemos B vs <b>Cabrini</b></span></div>
<div class="t" style="left:913px;top:576px;width:115px;height:18px;font-size:9.72px;text-align:left;color:#000;overflow:hidden;white-space:nowrap;"><span style="left:3px;right:3px;bottom:1.5px;"><b>DCC D</b> vs Cranbrook</span></div>
<div class="t" style="left:1029px;top:576px;width:109px;height:18px;font-size:9.72px;text-align:left;color:#000;overflow:hidden;white-space:nowrap;"><span style="left:3px;right:3px;bottom:1.5px;">DCC C BYE</span></div>
<div class="t" style="left:490px;top:595px;width:106px;height:17px;font-size:9.72px;text-align:left;color:#000;overflow:hidden;white-space:nowrap;"><span style="left:3px;right:3px;bottom:1.5px;"><b>DCDS A</b> vs Troy</span></div>
<div class="t" style="left:597px;top:595px;width:106px;height:17px;font-size:9.72px;text-align:left;color:#000;overflow:hidden;white-space:nowrap;"><span style="left:3px;right:3px;bottom:1.5px;">Okemos A vs <b>DCC B</b></span></div>
<div class="t" style="left:704px;top:595px;width:100px;height:17px;font-size:9.72px;text-align:left;color:#000;overflow:hidden;white-space:nowrap;"><span style="left:3px;right:3px;bottom:1.5px;"><b>DCC A</b> vs Strake</span></div>
<div class="t" style="left:805px;top:595px;width:107px;height:17px;font-size:9.72px;text-align:left;color:#000;overflow:hidden;white-space:nowrap;"><span style="left:3px;right:3px;bottom:1.5px;"><b>DCC D</b> vs Okemos B</span></div>
<div class="t" style="left:913px;top:595px;width:115px;height:17px;font-size:9.72px;text-align:left;color:#000;overflow:hidden;white-space:nowrap;"><span style="left:3px;right:3px;bottom:1.5px;"><b>DCC C</b> vs Cranbrook</span></div>
<div class="t" style="left:1029px;top:595px;width:109px;height:17px;font-size:9.72px;text-align:left;color:#000;overflow:hidden;white-space:nowrap;"><span style="left:3px;right:3px;bottom:1.5px;">Cabrini BYE</span></div>
<div class="t" style="left:490px;top:613px;width:106px;height:18px;font-size:9.72px;text-align:left;color:#000;overflow:hidden;white-space:nowrap;"><span style="left:3px;right:3px;bottom:1.5px;"><b>DCC A</b> vs Okemos A</span></div>
<div class="t" style="left:597px;top:613px;width:106px;height:18px;font-size:9.72px;text-align:left;color:#000;overflow:hidden;white-space:nowrap;"><span style="left:3px;right:3px;bottom:1.5px;">DCC B vs <b>DCDS A</b></span></div>
<div class="t" style="left:704px;top:613px;width:100px;height:18px;font-size:9.72px;text-align:left;color:#000;overflow:hidden;white-space:nowrap;"><span style="left:3px;right:3px;bottom:1.5px;">Troy A vs <b>Strake</b></span></div>
<div class="t" style="left:805px;top:613px;width:107px;height:18px;font-size:9.72px;text-align:left;color:#000;overflow:hidden;white-space:nowrap;"><span style="left:3px;right:3px;bottom:1.5px;">Cabrini vs <b>DCC C</b></span></div>
<div class="t" style="left:913px;top:613px;width:115px;height:18px;font-size:9.72px;text-align:left;color:#000;overflow:hidden;white-space:nowrap;"><span style="left:3px;right:3px;bottom:1.5px;">Cranbrook vs <b>Okemos B</b></span></div>
<div class="t" style="left:1029px;top:613px;width:109px;height:18px;font-size:9.72px;text-align:left;color:#000;overflow:hidden;white-space:nowrap;"><span style="left:3px;right:3px;bottom:1.5px;">DCC D BYE</span></div>
<div class="t" style="left:490px;top:632px;width:106px;height:19px;font-size:9.72px;text-align:left;color:#000;overflow:hidden;white-space:nowrap;"><span style="left:3px;right:3px;bottom:2.7px;">DCC A vs <b>DCDS A</b></span></div>
<div class="t" style="left:597px;top:632px;width:106px;height:19px;font-size:9.72px;text-align:left;color:#000;overflow:hidden;white-space:nowrap;"><span style="left:3px;right:3px;bottom:2.7px;">DCC B vs <b>Troy A</b></span></div>
<div class="t" style="left:704px;top:632px;width:100px;height:19px;font-size:9.72px;text-align:left;color:#000;overflow:hidden;white-space:nowrap;"><span style="left:3px;right:3px;bottom:3.7px;">Okemos A vs <b>Strake</b></span></div>
<div class="t" style="left:805px;top:632px;width:107px;height:19px;font-size:9.72px;text-align:left;color:#000;overflow:hidden;white-space:nowrap;"><span style="left:3px;right:3px;bottom:2.7px;"><b>DCC C</b> vs Okemos B</span></div>
<div class="t" style="left:913px;top:632px;width:115px;height:19px;font-size:9.72px;text-align:left;color:#000;overflow:hidden;white-space:nowrap;"><span style="left:3px;right:3px;bottom:2.7px;">Cabrini vs <b>DCC D</b></span></div>
<div class="t" style="left:1029px;top:632px;width:109px;height:19px;font-size:9.72px;text-align:left;color:#000;overflow:hidden;white-space:nowrap;"><span style="left:3px;right:3px;bottom:2.7px;">Cranbrook BYE</span></div>
<div class="t" style="left:704px;top:652px;width:100px;height:19px;font-size:11.45px;text-align:left;color:#000;overflow:hidden;white-space:nowrap;"><span style="left:3px;right:3px;bottom:1.8px;">DCDS vs <b>Strake</b></span></div>
<div class="t" style="left:324px;top:537px;width:814px;height:19px;font-size:9.75px;text-align:center;color:#000;font-weight:bold;overflow:hidden;"><span style="left:3px;right:3px;bottom:4.2px;">Lunch (Round 6 begins at 2:00pm Eastern)</span></div>
<div class="t" style="left:324px;top:442px;width:66px;height:94px;overflow:hidden;"><div class="v" style="font-size:16.9px;top:45.5px;margin-left:0.7px;">PRELIMS</div></div>
<div class="t" style="left:324px;top:557px;width:66px;height:114px;overflow:hidden;"><div class="v" style="font-size:16.7px;top:65.7px;margin-left:0.7px;">PLAYOFFS</div></div>
<div class="t" style="left:1228px;top:364px;width:89px;height:19px;font-size:11.45px;text-align:left;color:#000;font-weight:bold;overflow:hidden;white-space:nowrap;"><span style="left:37px;right:37px;bottom:2.1px;">PRELIMS</span></div>
<div class="t" style="left:1228px;top:384px;width:89px;height:19px;font-size:11.45px;text-align:left;color:#000;font-weight:bold;overflow:hidden;white-space:nowrap;"><span style="left:3px;right:3px;bottom:0.8px;">Frédéric</span></div>
<div class="t" style="left:1228px;top:404px;width:89px;height:18px;font-size:11.45px;text-align:left;color:#000;overflow:hidden;white-space:nowrap;"><span style="left:3px;right:3px;bottom:0.8px;">DCC D</span></div>
<div class="t" style="left:1228px;top:423px;width:89px;height:18px;font-size:11.45px;text-align:left;color:#000;overflow:hidden;white-space:nowrap;"><span style="left:3px;right:3px;bottom:0.8px;">Strake</span></div>
<div class="t" style="left:1228px;top:442px;width:89px;height:18px;font-size:11.45px;text-align:left;color:#000;overflow:hidden;white-space:nowrap;"><span style="left:3px;right:3px;bottom:0.8px;">DCDS A</span></div>
<div class="t" style="left:1228px;top:461px;width:89px;height:18px;font-size:11.45px;text-align:left;color:#000;overflow:hidden;white-space:nowrap;"><span style="left:3px;right:3px;bottom:0.8px;">Okemos B</span></div>
<div class="t" style="left:1228px;top:480px;width:89px;height:17px;font-size:11.45px;text-align:left;color:#000;overflow:hidden;white-space:nowrap;"><span style="left:3px;right:3px;bottom:0.8px;">Cranbrook</span></div>
<div class="t" style="left:1228px;top:498px;width:89px;height:18px;font-size:11.45px;text-align:left;color:#000;overflow:hidden;white-space:nowrap;"><span style="left:3px;right:3px;bottom:0.8px;">DCC B</span></div>
<div class="t" style="left:1228px;top:557px;width:89px;height:18px;font-size:11.45px;text-align:left;color:#000;font-weight:bold;overflow:hidden;white-space:nowrap;"><span style="left:3px;right:3px;bottom:0.8px;">Valse du</span></div>
<div class="t" style="left:1228px;top:576px;width:89px;height:18px;font-size:11.45px;text-align:left;color:#000;overflow:hidden;white-space:nowrap;"><span style="left:3px;right:3px;bottom:0.8px;">DCC A</span></div>
<div class="t" style="left:1228px;top:595px;width:89px;height:17px;font-size:11.45px;text-align:left;color:#000;overflow:hidden;white-space:nowrap;"><span style="left:3px;right:3px;bottom:0.8px;">DCDS</span></div>
<div class="t" style="left:1228px;top:613px;width:89px;height:18px;font-size:11.45px;text-align:left;color:#000;overflow:hidden;white-space:nowrap;"><span style="left:3px;right:3px;bottom:0.8px;">Strake</span></div>
<div class="t" style="left:1228px;top:632px;width:89px;height:19px;font-size:11.45px;text-align:left;color:#000;overflow:hidden;white-space:nowrap;"><span style="left:3px;right:3px;bottom:0.8px;">Troy</span></div>
<div class="t" style="left:1228px;top:652px;width:89px;height:19px;font-size:11.45px;text-align:left;color:#000;overflow:hidden;white-space:nowrap;"><span style="left:3px;right:3px;bottom:1.8px;">Okemos A</span></div>
<div class="t" style="left:1228px;top:537px;width:89px;height:19px;font-size:11.45px;text-align:left;color:#000;font-weight:bold;overflow:hidden;white-space:nowrap;"><span style="left:32px;right:32px;bottom:2.3px;">PLAYOFFS</span></div>
<div style="left:260px;top:192px;width:1020px;height:22px;background:#f8f9fa;"></div>
<div style="left:260px;top:213px;width:1020px;height:1px;background:#cacaca;"></div>
<div style="left:260px;top:192px;width:1020px;height:1px;background:#cacaca;"></div>
<div class="ch" style="left:300px;top:193px;width:23px;height:20px;background:#e8eaed;color:#5f6368;font-size:10px;text-align:center;line-height:20px;">A</div>
<div style="left:323px;top:193px;width:1px;height:20px;background:#cacaca;"></div>
<div class="ch" style="left:324px;top:193px;width:66px;height:20px;color:#5f6368;font-size:10px;text-align:center;line-height:20px;">B</div>
<div style="left:390px;top:193px;width:1px;height:20px;background:#cacaca;"></div>
<div class="ch" style="left:391px;top:193px;width:98px;height:20px;color:#5f6368;font-size:10px;text-align:center;line-height:20px;">C</div>
<div style="left:489px;top:193px;width:1px;height:20px;background:#cacaca;"></div>
<div class="ch" style="left:490px;top:193px;width:106px;height:20px;color:#5f6368;font-size:10px;text-align:center;line-height:20px;">D</div>
<div style="left:596px;top:193px;width:1px;height:20px;background:#cacaca;"></div>
<div class="ch" style="left:597px;top:193px;width:106px;height:20px;color:#5f6368;font-size:10px;text-align:center;line-height:20px;">E</div>
<div style="left:703px;top:193px;width:1px;height:20px;background:#cacaca;"></div>
<div class="ch" style="left:704px;top:193px;width:100px;height:20px;color:#5f6368;font-size:10px;text-align:center;line-height:20px;">F</div>
<div style="left:804px;top:193px;width:1px;height:20px;background:#cacaca;"></div>
<div class="ch" style="left:805px;top:193px;width:107px;height:20px;color:#5f6368;font-size:10px;text-align:center;line-height:20px;">G</div>
<div style="left:912px;top:193px;width:1px;height:20px;background:#cacaca;"></div>
<div class="ch" style="left:913px;top:193px;width:115px;height:20px;color:#5f6368;font-size:10px;text-align:center;line-height:20px;">H</div>
<div style="left:1028px;top:193px;width:1px;height:20px;background:#cacaca;"></div>
<div class="ch" style="left:1029px;top:193px;width:109px;height:20px;color:#5f6368;font-size:10px;text-align:center;line-height:20px;">I</div>
<div style="left:1138px;top:193px;width:1px;height:20px;background:#cacaca;"></div>
<div class="ch" style="left:1139px;top:193px;width:88px;height:20px;color:#5f6368;font-size:10px;text-align:center;line-height:20px;">J</div>
<div style="left:1227px;top:193px;width:1px;height:20px;background:#cacaca;"></div>
<div class="ch" style="left:1228px;top:193px;width:89px;height:20px;color:#5f6368;font-size:10px;text-align:center;line-height:20px;">K</div>
<div style="left:1317px;top:193px;width:1px;height:20px;background:#cacaca;"></div>
<div style="left:260px;top:214px;width:40px;height:458px;background:#f8f9fa;"></div>
<div style="left:299px;top:193px;width:1px;height:479px;background:#cacaca;"></div>
<div class="ch" style="left:260px;top:214px;width:39px;height:18px;background:#e8eaed;color:#5f6368;font-size:10px;text-align:center;line-height:19px;">1</div>
<div style="left:260px;top:232px;width:39px;height:1px;background:#cacaca;"></div>
<div class="ch" style="left:260px;top:233px;width:39px;height:17px;color:#5f6368;font-size:10px;text-align:center;line-height:18px;">2</div>
<div style="left:260px;top:250px;width:39px;height:1px;background:#cacaca;"></div>
<div class="ch" style="left:260px;top:251px;width:39px;height:46px;color:#5f6368;font-size:10px;text-align:center;line-height:47px;">3</div>
<div style="left:260px;top:297px;width:39px;height:1px;background:#cacaca;"></div>
<div class="ch" style="left:260px;top:298px;width:39px;height:46px;color:#5f6368;font-size:10px;text-align:center;line-height:47px;">4</div>
<div style="left:260px;top:344px;width:39px;height:1px;background:#cacaca;"></div>
<div class="ch" style="left:260px;top:345px;width:39px;height:18px;color:#5f6368;font-size:10px;text-align:center;line-height:19px;">5</div>
<div style="left:260px;top:363px;width:39px;height:1px;background:#cacaca;"></div>
<div class="ch" style="left:260px;top:364px;width:39px;height:19px;color:#5f6368;font-size:10px;text-align:center;line-height:20px;">6</div>
<div style="left:260px;top:383px;width:39px;height:1px;background:#cacaca;"></div>
<div class="ch" style="left:260px;top:384px;width:39px;height:19px;color:#5f6368;font-size:10px;text-align:center;line-height:20px;">7</div>
<div style="left:260px;top:403px;width:39px;height:1px;background:#cacaca;"></div>
<div class="ch" style="left:260px;top:404px;width:39px;height:18px;color:#5f6368;font-size:10px;text-align:center;line-height:19px;">8</div>
<div style="left:260px;top:422px;width:39px;height:1px;background:#cacaca;"></div>
<div class="ch" style="left:260px;top:423px;width:39px;height:18px;color:#5f6368;font-size:10px;text-align:center;line-height:19px;">9</div>
<div style="left:260px;top:441px;width:39px;height:1px;background:#cacaca;"></div>
<div class="ch" style="left:260px;top:442px;width:39px;height:18px;color:#5f6368;font-size:10px;text-align:center;line-height:19px;">10</div>
<div style="left:260px;top:460px;width:39px;height:1px;background:#cacaca;"></div>
<div class="ch" style="left:260px;top:461px;width:39px;height:18px;color:#5f6368;font-size:10px;text-align:center;line-height:19px;">11</div>
<div style="left:260px;top:479px;width:39px;height:1px;background:#cacaca;"></div>
<div class="ch" style="left:260px;top:480px;width:39px;height:17px;color:#5f6368;font-size:10px;text-align:center;line-height:18px;">12</div>
<div style="left:260px;top:497px;width:39px;height:1px;background:#cacaca;"></div>
<div class="ch" style="left:260px;top:498px;width:39px;height:18px;color:#5f6368;font-size:10px;text-align:center;line-height:19px;">13</div>
<div style="left:260px;top:516px;width:39px;height:1px;background:#cacaca;"></div>
<div class="ch" style="left:260px;top:517px;width:39px;height:19px;color:#5f6368;font-size:10px;text-align:center;line-height:20px;">14</div>
<div style="left:260px;top:536px;width:39px;height:1px;background:#cacaca;"></div>
<div class="ch" style="left:260px;top:537px;width:39px;height:19px;color:#5f6368;font-size:10px;text-align:center;line-height:20px;">15</div>
<div style="left:260px;top:556px;width:39px;height:1px;background:#cacaca;"></div>
<div class="ch" style="left:260px;top:557px;width:39px;height:18px;color:#5f6368;font-size:10px;text-align:center;line-height:19px;">16</div>
<div style="left:260px;top:575px;width:39px;height:1px;background:#cacaca;"></div>
<div class="ch" style="left:260px;top:576px;width:39px;height:18px;color:#5f6368;font-size:10px;text-align:center;line-height:19px;">17</div>
<div style="left:260px;top:594px;width:39px;height:1px;background:#cacaca;"></div>
<div class="ch" style="left:260px;top:595px;width:39px;height:17px;color:#5f6368;font-size:10px;text-align:center;line-height:18px;">18</div>
<div style="left:260px;top:612px;width:39px;height:1px;background:#cacaca;"></div>
<div class="ch" style="left:260px;top:613px;width:39px;height:18px;color:#5f6368;font-size:10px;text-align:center;line-height:19px;">19</div>
<div style="left:260px;top:631px;width:39px;height:1px;background:#cacaca;"></div>
<div class="ch" style="left:260px;top:632px;width:39px;height:19px;color:#5f6368;font-size:10px;text-align:center;line-height:20px;">20</div>
<div style="left:260px;top:651px;width:39px;height:1px;background:#cacaca;"></div>
<div class="ch" style="left:260px;top:652px;width:39px;height:19px;color:#5f6368;font-size:10px;text-align:center;line-height:20px;">21</div>
<div style="left:260px;top:671px;width:39px;height:1px;background:#cacaca;"></div>
<div style="left:260px;top:193px;width:39px;height:20px;background:#f8f9fa;"></div>
<div style="left:296px;top:193px;width:4px;height:21px;background:#bdbdbd;"></div>
<div style="left:260px;top:209px;width:40px;height:4.5px;background:#bdbdbd;"></div>
<div style="left:300px;top:214px;width:24px;height:19px;border:1.7px solid #2f72e4;box-sizing:border-box;background:#fff;"></div><!-- Sheets header -->
<svg style="left:280px;top:91px;" width="24" height="33" viewBox="0 0 24 33"><path d="M2.200 0 H15 L23.500 8.500 V30.800 a2.200 2.200 0 0 1 -2.200 2.200 H2.200 A2.200 2.200 0 0 1 0 30.800 V2.200 A2.200 2.200 0 0 1 2.200 0z" fill="#4aa660"/><path d="M15 0 L23.500 8.500 H17 a2 2 0 0 1 -2 -2z" fill="#33894c"/><path transform="translate(-0.5,-1)" d="M5 14.500 H18.500 V25 H5z M6.800 16.300 V18.900 H10.800 V16.300z M12.600 16.300 V18.900 H16.700 V16.300z M6.800 20.600 V23.200 H10.800 V20.600z M12.600 20.600 V23.200 H16.700 V20.600z" fill="#fff" fill-rule="evenodd"/></svg>
<div style="left:323px;top:88.5px;font-size:15.7px;color:#000;white-space:nowrap;">2022 MINEWT Waltz Schedule</div>
<svg style="left:561px;top:90px;" width="70" height="16" viewBox="0 0 70 16"><path d="M8 1.800 L9.800 6 L14.300 6.400 L10.900 9.400 L11.900 13.800 L8 11.500 L4.100 13.800 L5.100 9.400 L1.700 6.400 L6.200 6z" fill="none" stroke="#5f6368" stroke-width="1.100" stroke-linejoin="round"/><path d="M41.300 7.800 L37.600 1.400 H32 L27.300 9.700 L30.100 14 H36.300 M34.800 5.100 L31.600 10.300 H37.200z" fill="none" stroke="#5f6368" stroke-width="1.150" stroke-linejoin="round" stroke-linecap="round"/><path d="M39.900 9.300 V14.100 M37.500 11.700 H42.300" stroke="#5f6368" stroke-width="1.200" fill="none"/><path d="M57 12.500 H65.500 a2.700 2.700 0 0 0 0.400 -5.400 a4.200 4.200 0 0 0 -8 -1 A3.300 3.300 0 0 0 57 12.500z" fill="none" stroke="#5f6368" stroke-width="1.100"/><path d="M59.300 8.800 L60.800 10.300 L63.600 7.500" fill="none" stroke="#5f6368" stroke-width="1.100"/></svg>
<div class="mi" style="left:322.700px;">File</div>
<div class="mi" style="left:355.500px;">Edit</div>
<div class="mi" style="left:389.500px;">View</div>
<div class="mi" style="left:429.700px;letter-spacing:0.15px;">Insert</div>
<div class="mi" style="left:475.200px;">Format</div>
<div class="mi" style="left:528.200px;">Data</div>
<div class="mi" style="left:567px;letter-spacing:0.3px;">Tools</div>
<div class="mi" style="left:611.200px;">Extensions</div>
<div class="mi" style="left:686px;">Help</div>
<div class="mi" style="left:730.700px;color:#5f6368;text-decoration:underline;font-size:12.35px;top:115.2px;">Last edit was made 8 days ago by Jimmy Dunn</div>
<svg style="left:1257px;top:97px;" width="20" height="19" viewBox="0 0 20 19"><path d="M1.800 1.500 H17.200 V13.600 H14.500 L17.800 17.300 V13.600 H1.800z" fill="none" stroke="#5a5e63" stroke-width="1.600" stroke-linejoin="round"/><path d="M14 13.600 L18 18 V13.600z" fill="#5a5e63"/><rect x="4.500" y="4" width="10" height="1.400" fill="#5a5e63"/><rect x="4.500" y="6.800" width="10" height="1.400" fill="#5a5e63"/><rect x="4.500" y="9.600" width="10" height="1.400" fill="#5a5e63"/></svg>
<!-- toolbar -->
<div style="left:260px;top:136px;width:1020px;height:1px;background:#e3e5e8;"></div>
<div style="left:260px;top:169.500px;width:1020px;height:2.500px;background:#ebedf0;"></div>
<svg style="left:288px;top:146px;" width="100" height="17" viewBox="0 0 100 17"><g fill="none" stroke="#5f6368" stroke-width="1.700"><path d="M6.300 8.300 C9.200 5.300 14.600 5.200 17 10.900"/><path d="M40.050 8.300 C37.150 5.300 31.750 5.200 29.350 10.900"/></g><path d="M3.200 5 V10.900 H9.100z" fill="#5f6368"/><path d="M43.150 5 V10.900 H37.250z" fill="#5f6368"/><path d="M56.200 2 H64.600 V3.900 H56.200z M55.200 4.900 H65.600 a1.800 1.800 0 0 1 1.800 1.800 V11.800 H64.600 V14.200 H56.200 V11.800 H53.400 V6.700 a1.800 1.800 0 0 1 1.800 -1.800z M57.700 9.800 V12.800 H63.100 V9.800z M64.300 7.100 h1.500 v1.500 h-1.500z" fill="#5f6368" fill-rule="evenodd"/><rect x="80.100" y="2.250" width="8.900" height="3.500" rx="0.500" fill="#5f6368"/><path d="M89 3.900 H91.100 V8.050 H84.400 V14.100" fill="none" stroke="#5f6368" stroke-width="1.600"/></svg>
<div class="sep" style="left:389.500px;"></div>
<div class="tb" style="left:404px;top:147.6px;font-size:10.2px;">100%</div>
<svg style="left:440px;top:152px;" width="9" height="6" viewBox="0 0 9 6"><path d="M0.800 0.800 H8.200 L4.500 4.800z" fill="#5a5e63"/></svg>
<div class="sep" style="left:455.500px;"></div>
<div class="tb" style="left:468.8px;top:146.5px;font-size:11.5px;">$</div>
<div class="tb" style="left:492px;top:148px;font-size:10px;">%</div>
<div class="tb" style="left:514px;top:148px;font-size:10.4px;">.0</div>
<svg style="left:520px;top:158px;" width="8" height="6" viewBox="0 0 8 6"><path d="M7.500 3 H1.500 M3.300 0.800 L1.200 3 L3.300 5.200" fill="none" stroke="#5a5e63" stroke-width="1.100"/></svg>
<div class="tb" style="left:537.5px;top:148px;font-size:10.6px;">.00</div>
<svg style="left:546px;top:158px;" width="8" height="6" viewBox="0 0 8 6"><path d="M0.500 3 H6.500 M4.700 0.800 L6.800 3 L4.700 5.200" fill="none" stroke="#5a5e63" stroke-width="1.100"/></svg>
<div class="tb" style="left:562.500px;top:147.9px;font-size:10px;">123</div>
<svg style="left:582px;top:152px;" width="7" height="5" viewBox="0 0 7 5"><path d="M0.300 0.800 H6.700 L3.500 4.300z" fill="#5a5e63"/></svg>
<div class="sep" style="left:597.500px;"></div>
<div class="tb" style="left:612px;top:147.6px;font-size:10.45px;">Default (Ari...</div>
<svg style="left:683px;top:152px;" width="9" height="6" viewBox="0 0 9 6"><path d="M0.800 0.800 H8.200 L4.500 4.800z" fill="#5a5e63"/></svg>
<div class="sep" style="left:698px;"></div>
<div class="tb" style="left:712.500px;top:147.6px;font-size:10.3px;">10</div>
<svg style="left:749px;top:152px;" width="9" height="6" viewBox="0 0 9 6"><path d="M0.800 0.800 H8.200 L4.500 4.800z" fill="#5a5e63"/></svg>
<div class="sep" style="left:764.500px;"></div>
<div class="tb" style="left:775px;top:145.500px;font-size:14.500px;font-weight:bold;color:#54585d;">B</div>
<div class="tb" style="left:801.500px;top:145.500px;font-size:14.500px;font-style:italic;font-family:'Liberation Serif',serif;font-weight:bold;color:#54585d;">I</div>
<div class="tb" style="left:826px;top:146px;font-size:13.500px;text-decoration:line-through;color:#54585d;">S</div>
<div class="tb" style="left:851.500px;top:144px;font-size:13.500px;">A</div>
<div style="left:847px;top:160.800px;width:18.500px;height:3.200px;background:#000;"></div>
<div class="sep" style="left:874px;"></div>
<svg style="left:882px;top:146px;" width="90" height="17" viewBox="0 0 90 17"><path d="M6.500 1.500 L13 8 L8 13 a1 1 0 0 1 -1.400 0 L2.500 9 a1 1 0 0 1 0 -1.400 L7.300 2.800 L6 1.500z M7.800 4.300 L4.400 8 H11.300z" fill="#5a5e63" fill-rule="evenodd"/><path d="M14.500 10.500 c0 0 -1.500 1.700 -1.500 2.600 a1.500 1.500 0 0 0 3 0 c0 -0.900 -1.500 -2.600 -1.500 -2.600z" fill="#5a5e63"/><path d="M29.300 2.200 H42 V15 H29.300z M30.900 3.800 V7.800 H34.900 V3.800z M36.500 3.800 V7.800 H40.400 V3.800z M30.900 9.400 V13.400 H34.900 V9.400z M36.500 9.400 V13.400 H40.400 V9.400z" fill="#5a5e63" fill-rule="evenodd"/><g fill="none" stroke="#c4c7c5" stroke-width="1.200"><path d="M55.500 5.500 V2.800 H68.500 V5.500 M55.500 11.500 V14.200 H68.500 V11.500" stroke-dasharray="2.500 1.500"/><path d="M56 8.500 H60.500 M58.800 6.800 L60.500 8.500 L58.800 10.200 M68 8.500 H63.500 M65.200 6.800 L63.500 8.500 L65.200 10.200"/></g><path d="M79 7 H85 L82 10.300z" fill="#c4c7c5"/></svg>
<div class="sep" style="left:976px;"></div>
<svg style="left:984px;top:146px;" width="135" height="17" viewBox="0 0 135 17"><g fill="#5a5e63"><rect x="1" y="2.500" width="12.500" height="1.500"/><rect x="1" y="5.800" width="8.500" height="1.500"/><rect x="1" y="9.100" width="12.500" height="1.500"/><rect x="1" y="12.400" width="8.500" height="1.500"/><path d="M19.500 7 H26 L22.800 10.500z"/><rect x="37" y="13" width="11" height="1.600"/><path d="M41.700 2 H43.300 V8 H45.800 L42.500 11.500 L39.200 8 H41.700z"/><path d="M54 7 H60.500 L57.300 10.500z"/><rect x="70.500" y="2" width="1.500" height="13"/><rect x="76.300" y="2" width="1.500" height="3.500"/><rect x="76.300" y="11.500" width="1.500" height="3.500"/><path d="M74 7.700 H80 V5.800 L83.300 8.500 L80 11.200 V9.300 H74z"/><path d="M89 7 H95.500 L92.300 10.500z"/><path d="M124 7 H130.500 L127.300 10.500z"/></g><g fill="none" stroke="#5a5e63" stroke-width="1.500"><path d="M105.500 3 L117 6.800 M106 3 L110.300 13.500 M108.500 9 L113.800 7"/><path d="M109 15 L118.500 5.500 M115 5 H119 V9"/></g></svg>
<div class="sep" style="left:1122.500px;"></div>
<svg style="left:1130px;top:146px;" width="150" height="17" viewBox="0 0 150 17"><g fill="none" stroke="#5a5e63" stroke-width="1.600"><path d="M7.500 4.500 H5.500 a4 4 0 0 0 0 8 H7.500 M10.500 4.500 H12.500 a4 4 0 0 1 0 8 H10.500 M5.800 8.500 H12.200"/><path d="M28.500 2.800 H40 V11.300 H31.500 L28.500 14.300z" stroke-linejoin="round" stroke-width="1.400"/><path d="M34.300 4.800 V9.300 M32 7 H36.600" stroke-width="1.300"/><rect x="52.800" y="2.300" width="12.400" height="12.400" stroke-width="1.600"/><path d="M80.500 3.300 H90.500 L86.300 9 V13.500 H84.700 V9z" stroke-width="1.400" stroke-linejoin="round"/></g><g fill="#5a5e63"><rect x="55.800" y="8" width="1.600" height="4.500"/><rect x="58.300" y="5" width="1.600" height="7.500"/><rect x="60.800" y="9.500" width="1.600" height="3"/><path d="M100.500 7 H107 L103.800 10.500z"/><path d="M119 2.300 H128.500 V4.500 H122.300 L126 8.500 L122.300 12.500 H128.500 V14.700 H119 V13 L123.300 8.500 L119 4z"/><path d="M136.500 7.500 H141.500 L139 10.200z" fill="#80868b"/></g></svg>
<!-- formula bar -->
<div style="left:260px;top:172px;width:1020px;height:20px;background:#fff;"></div>
<div class="tb" style="left:266.500px;top:176px;font-size:10.2px;color:#202124;">A1</div>
<svg style="left:338px;top:180px;" width="8" height="5" viewBox="0 0 8 5"><path d="M0.800 0.500 H7.200 L4 4.200z" fill="#80868b"/></svg>
<div style="left:350.500px;top:173px;width:1px;height:17px;background:#dadce0;"></div>
<div style="left:389.500px;top:174px;width:1px;height:15px;background:#dadce0;"></div>
<div class="tb" style="left:362.5px;top:170.5px;font-size:19px;font-style:italic;color:#b9bcc0;font-family:'Liberation Serif',serif;">fx</div>
<!-- bottom: scrollbar + sheet tabs -->
<div style="left:260px;top:672px;width:1020px;height:11px;background:#fdfdfd;"></div>
<div style="left:260px;top:672px;width:40px;height:11px;background:#f8f9fa;border-right:1px solid #d8d8d8;box-sizing:border-box;"></div>
<div style="left:301px;top:673px;width:586px;height:8px;border-radius:4px;background:#dadce0;"></div>
<div style="left:260px;top:683px;width:1020px;height:34px;background:linear-gradient(180deg,#f0f2f3 0,#e8e9ea 100%);border-top:1px solid #e6e7e9;"></div>
<div style="left:1180px;top:676px;width:100px;height:40px;background:radial-gradient(ellipse at 100% 100%,rgba(255,255,255,0.75) 0,rgba(255,255,255,0.3) 45%,rgba(255,255,255,0) 75%);"></div>
<div style="left:554.500px;top:683px;width:100.500px;height:34px;background:#fff;box-shadow:0 0 3px rgba(60,64,67,0.25);"></div>
<div style="left:554.500px;top:681px;width:100.500px;height:3px;background:#fff;"></div>
<svg style="left:303px;top:693px;" width="45" height="14" viewBox="0 0 45 14"><path d="M6.300 1.800 V11.200 M1.600 6.500 H11" stroke="#5f6368" stroke-width="1.500" fill="none"/><g fill="#5f6368"><rect x="29" y="2" width="10.500" height="1.400"/><rect x="29" y="4.700" width="10.500" height="1.400"/><rect x="29" y="7.400" width="10.500" height="1.400"/><rect x="29" y="10.100" width="10.500" height="1.400"/></g></svg>
<div class="tb" style="left:377.500px;top:691.500px;font-size:13.4px;color:#5f6368;-webkit-text-stroke:0.3px;">Rules &amp; Announcements</div>
<svg style="left:533px;top:697px;" width="8" height="5" viewBox="0 0 8 5"><path d="M0.500 0.500 H7.500 L4 4.300z" fill="#80868b"/></svg>
<div class="tb" style="left:569px;top:691.500px;font-size:13.4px;color:#188038;-webkit-text-stroke:0.3px;">Schedule</div>
<svg style="left:633.500px;top:697px;" width="8" height="5" viewBox="0 0 8 5"><path d="M0.500 0.500 H7.500 L4 4.300z" fill="#188038"/></svg>
<!-- safari window left edge line & corner mask -->
<div style="left:260px;top:708px;width:10px;height:10px;background:radial-gradient(circle at 100% 0,rgba(20,20,20,0) 9.3px,#151515 10.3px);"></div>
<div style="left:259px;top:79px;width:1px;height:640px;background:rgba(0,0,0,0.35);"></div>
</div></body></html>
